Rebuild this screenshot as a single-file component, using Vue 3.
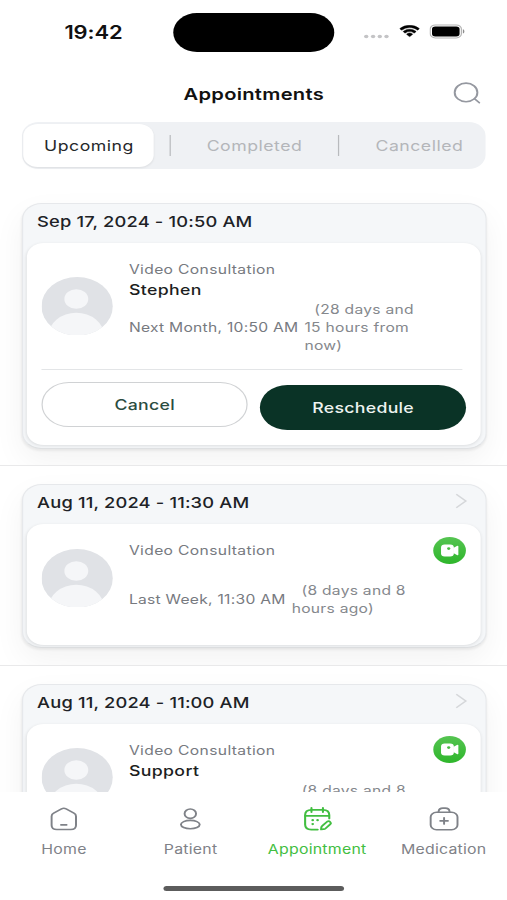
<script setup>
const filters = ['Upcoming', 'Completed', 'Cancelled']

const appointments = [
  {
    date: 'Sep 17, 2024 - 10:50 AM',
    kind: 'Video Consultation',
    name: 'Stephen',
    when: 'Next Month, 10:50 AM',
    relative: ['(28 days and', '15 hours from', 'now)'],
    editable: true,
  },
  {
    date: 'Aug 11, 2024 - 11:30 AM',
    kind: 'Video Consultation',
    name: '',
    when: 'Last Week, 11:30 AM',
    relative: ['(8 days and 8', 'hours ago)'],
    editable: false,
  },
  {
    date: 'Aug 11, 2024 - 11:00 AM',
    kind: 'Video Consultation',
    name: 'Support',
    when: 'Last Week, 11:00 AM',
    relative: ['(8 days and 8', 'hours ago)'],
    editable: false,
  },
]
</script>

<template>
  <div class="viewport">
    <div class="screen">
      <header class="status">
        <div class="clock">19:42</div>
        <div class="island"></div>
        <div class="signals">
          <svg class="dots" width="21" height="5" viewBox="0 0 21 5" fill="#c4c4c6">
            <circle cx="2.2" cy="2.5" r="1.8" /><circle cx="7.8" cy="2.5" r="1.8" />
            <circle cx="13.3" cy="2.5" r="1.8" /><circle cx="18.8" cy="2.5" r="1.8" />
          </svg>
          <svg class="wifi" width="17.5" height="13" viewBox="0 0 17.5 13" fill="#000" stroke="#000" stroke-width=".4">
            <path d="M8.75 2.6c2.4 0 4.6.95 6.25 2.5.13.12.33.12.45 0l1.2-1.2a.33.33 0 0 0 0-.47 11.4 11.4 0 0 0-15.8 0 .33.33 0 0 0 0 .47l1.2 1.2c.12.12.32.12.45 0A9.1 9.1 0 0 1 8.75 2.6z" />
            <path d="M8.75 6.6c1.3 0 2.55.5 3.5 1.35.13.12.33.12.46 0l1.2-1.2a.33.33 0 0 0 0-.48 7.5 7.5 0 0 0-10.3 0 .33.33 0 0 0 0 .48l1.2 1.2c.13.12.33.12.46 0A5.2 5.2 0 0 1 8.75 6.6z" />
            <path d="M11.1 9.4a.33.33 0 0 0 0-.5 3.6 3.6 0 0 0-4.7 0 .33.33 0 0 0 0 .5l2.1 2.1c.13.14.35.14.48 0z" />
          </svg>
          <svg class="battery" width="29" height="15" viewBox="0 0 29 15">
            <rect x=".6" y=".9" width="25.6" height="13" rx="4.2" fill="none" stroke="#b4b4b4" />
            <rect x="2.1" y="2.4" width="22.6" height="10" rx="2.7" fill="#000" />
            <path d="M27.4 5.3v4.2c.8-.35 1.3-1.2 1.3-2.1s-.5-1.75-1.3-2.1z" fill="#8e8e8e" />
          </svg>
        </div>
      </header>

      <div class="titlebar">
        <h1>Appointments</h1>
        <svg class="search" width="23" height="23" viewBox="0 0 23 23" fill="none" stroke="#9598a0" stroke-width="1.6" stroke-linecap="round">
          <circle cx="11" cy="10.4" r="9.3" /><path d="M18 16.8l3.9 3.9" />
        </svg>
      </div>

      <div class="segments">
        <template v-for="(f, i) in filters" :key="f">
          <i v-if="i" class="bar"></i>
          <button :class="['segment', 's' + i, { active: i === 0 }]"><span>{{ f }}</span></button>
        </template>
      </div>

      <main class="list">
        <section v-for="a in appointments" :key="a.date" class="item">
          <article class="card">
            <div class="card-head">
              <span>{{ a.date }}</span>
              <svg v-if="!a.editable" width="10" height="16" viewBox="0 0 10 16" fill="none" stroke="#d5d7da" stroke-width="1.4">
                <path d="M1 1.2l7.8 6.8L1 14.8" />
              </svg>
            </div>
            <div class="card-body">
              <div class="details">
                <svg class="avatar" width="58.5" height="58.5" viewBox="0 0 58 58">
                  <clipPath id="face"><circle cx="29" cy="29" r="29" /></clipPath>
                  <g clip-path="url(#face)">
                    <rect width="58" height="58" fill="#e0e2e6" />
                    <circle cx="28.3" cy="21.8" r="9.7" fill="#f5f6f8" />
                    <circle cx="28.3" cy="58" r="22.5" fill="#f5f6f8" />
                  </g>
                </svg>
                <div class="info">
                  <div class="kind">{{ a.kind }}</div>
                  <div class="name">{{ a.name }}</div>
                  <div class="times">
                    <span class="when">{{ a.when }}</span>
                    <div class="relative">
                      <div v-for="line in a.relative" :key="line">{{ line }}</div>
                    </div>
                  </div>
                </div>
                <svg v-if="!a.editable" class="video" width="27" height="27" viewBox="0 0 27 27">
                  <defs>
                    <linearGradient id="green" x1="0" y1="0" x2="0" y2="1">
                      <stop offset="0" stop-color="#55c451" /><stop offset="1" stop-color="#2eb62b" />
                    </linearGradient>
                  </defs>
                  <circle cx="13.5" cy="13.5" r="13.4" fill="url(#green)" />
                  <rect x="6.5" y="7.6" width="10.5" height="11.8" rx="3" fill="#fff" />
                  <path d="M16.5 11l3-2q1.2-.6 1.2.6v7.8q0 1.2-1.2.6l-3-2z" fill="#fff" />
                  <circle cx="12.8" cy="11.6" r="1.3" fill="#45bd40" />
                </svg>
              </div>
              <div v-if="a.editable" class="actions">
                <button class="cancel">Cancel</button>
                <button class="reschedule">Reschedule</button>
              </div>
            </div>
          </article>
        </section>
      </main>

      <nav class="tabs">
        <a>
          <svg width="26" height="26" viewBox="0 0 26 26" fill="none" stroke="currentColor" stroke-width="1.6" stroke-linecap="round" stroke-linejoin="round">
            <path d="M3.3 10.2q0-2 1.7-3.1l6.4-4.2q1.9-1.2 3.8 0l6.4 4.2q1.7 1.1 1.7 3.1v9q0 4.3-4.3 4.3H7.6q-4.3 0-4.3-4.3z" />
            <path d="M11 18.9h4.6" />
          </svg>
          <span>Home</span>
        </a>
        <a>
          <svg width="26" height="26" viewBox="0 0 26 26" fill="none" stroke="currentColor" stroke-width="1.6">
            <circle cx="13" cy="7.7" r="4.7" /><ellipse cx="13" cy="18.6" rx="7.7" ry="4.2" />
          </svg>
          <span>Patient</span>
        </a>
        <a class="current">
          <svg width="26" height="26" viewBox="0 0 26 26" fill="none" stroke="currentColor" stroke-width="1.7" stroke-linecap="round" stroke-linejoin="round">
            <path d="M8.3 1.9v4.2M17.7 1.9v4.2" />
            <path d="M8.3 3.9h9.4M8.3 3.9q-5.2.2-5.2 5v9.7q0 5 5 5h5.3M17.7 3.9q5.2.2 5.2 5v3.6" />
            <path d="M3.3 9.9h19.4" />
            <path d="M9.3 14.2h.02M13.3 14.2h.02M9.3 18.1h.02" stroke-width="2.2" />
            <path d="M21.3 15.5l-4.2 4.4q-.6.6-.7 1.5l-.2 2.1 2.1-.3q.9-.1 1.5-.7l4-4.4q.9-1-.1-2.1-1.1-1.3-2.4-.5z" />
          </svg>
          <span>Appointment</span>
        </a>
        <a>
          <svg width="26" height="26" viewBox="0 0 26 26" fill="none" stroke="currentColor" stroke-width="1.6" stroke-linecap="round" stroke-linejoin="round">
            <rect x="2" y="6.3" width="22" height="17.4" rx="4.8" />
            <path d="M8.5 6v-.5Q8.8 2.1 12 2.1h2q3.2 0 3.5 3.4V6" />
            <path d="M13 11.7v6.4M9.8 14.9h6.4" />
          </svg>
          <span>Medication</span>
        </a>
      </nav>
      <div class="home-bar"></div>
    </div>
  </div>
</template>

<style>
body {
  background: #fff;
}
</style>

<style scoped>
* {
  box-sizing: border-box;
}

.viewport {
  width: 507px;
  height: 900px;
  overflow: hidden;
}

/* The phone screen is laid out narrow and widened to fill the viewport. */
.screen {
  display: flex;
  flex-direction: column;
  width: 415.57px;
  height: 900px;
  background: #fff;
  color: #202226;
  font-family: Inter, "Liberation Sans", sans-serif;
  font-size: 13px;
  white-space: nowrap;
  transform: scaleX(1.22);
  transform-origin: 0 0;
}

button {
  margin: 0;
  padding: 0;
  border: 0;
  background: none;
  font: inherit;
  letter-spacing: inherit;
}

.status {
  display: grid;
  grid-template-columns: 142px 132px 1fr;
  height: 64px;
  flex: none;
}

.clock {
  padding: 22px 0 0 52.8px;
  color: #111;
  font-size: 18px;
  font-weight: 600;
  line-height: 22px;
  letter-spacing: -0.1px;
}

.island {
  height: 39px;
  margin-top: 12.5px;
  border-radius: 20px;
  background: #000;
}

.signals {
  display: flex;
  padding: 24px 0 0 23.5px;
}

.dots {
  margin-top: 9.5px;
}

.wifi {
  margin: 1px 0 0 8px;
}

.battery {
  margin-left: 7.5px;
}

.titlebar {
  display: grid;
  grid-template-columns: 1fr auto 1fr;
  height: 58px;
  flex: none;
  padding: 0 21.5px 0 22px;
}

h1 {
  grid-column: 2;
  margin: 19px 0 0;
  color: #111;
  font-size: 16.5px;
  font-weight: 600;
  line-height: 22px;
  letter-spacing: 0.23px;
}

.search {
  justify-self: end;
  margin-top: 18px;
}

.segments {
  display: flex;
  align-items: center;
  flex: none;
  width: 380.5px;
  height: 46.5px;
  margin-left: 17.9px;
  padding: 2px 2px 2px 1.5px;
  border-radius: 14px;
  background: #eff1f4;
  font-size: 14.5px;
  letter-spacing: 0.4px;
}

.segment {
  flex: none;
  height: 42.5px;
  color: #b4b6ba;
}

.s0 {
  width: 107px;
}

.s1 {
  width: 137px;
}

.s2 {
  width: 131px;
}

.segment.active {
  border-radius: 12px;
  background: #fff;
  box-shadow: 0 1px 2px rgba(0, 0, 0, 0.08);
  color: #26282b;
}

.bar {
  flex: none;
  width: 1.2px;
  height: 21px;
  background: #b8babd;
}

.s0 + .bar {
  margin-left: 12.5px;
}

.list {
  flex: 1;
  min-height: 0;
  padding-top: 16.8px;
  overflow: hidden;
}

.item {
  padding: 17.6px 17px 16.9px 17.9px;
  overflow: hidden;
  border-bottom: 1px solid #e9e9ea;
}

.card {
  padding: 0 3.5px 2.5px;
  border: 1px solid #e6e8eb;
  border-bottom-color: #dfe1e3;
  border-radius: 16px;
  background: #f5f7f9;
  box-shadow: 0 2px 2px rgba(0, 0, 0, 0.06), 0 12px 28px rgba(0, 0, 0, 0.05);
}

.card-head {
  display: flex;
  justify-content: space-between;
  height: 39px;
  padding: 7px 11px 0 8px;
  font-size: 15px;
  font-weight: 500;
  line-height: 22px;
  letter-spacing: 0.13px;
}

.card-head svg {
  margin-top: 1.2px;
}

.card-body {
  border-radius: 14px;
  background: #fff;
  padding: 18px 12px 15.2px;
  box-shadow: 0 1px 3px rgba(0, 0, 0, 0.1);
}

.details {
  display: flex;
  padding-bottom: 11.5px;
}

.avatar {
  flex: none;
  align-self: center;
  margin-top: -4px;
}

.info {
  flex: 1;
  padding-left: 12.8px;
  color: #777a7f;
  font-size: 12.8px;
  line-height: 18px;
  letter-spacing: 0.3px;
}

.kind {
  height: 18px;
}

.name {
  height: 22px;
  color: #1c1e21;
  font-size: 14.5px;
  font-weight: 500;
  line-height: 22px;
}

.times {
  display: flex;
  align-items: center;
}

.when {
  letter-spacing: 0.22px;
}

.relative {
  margin-left: 5px;
  color: #85888d;
  letter-spacing: 0.22px;
}

.relative div:first-child {
  padding-left: 8px;
}

.video {
  flex: none;
  margin: -5.5px 0.5px 0 0;
}

.actions {
  display: flex;
  gap: 10.5px;
  margin: 3px 3px 0 0;
  padding-top: 12px;
  border-top: 1px solid #e3e5e7;
  font-size: 14.5px;
  font-weight: 500;
  letter-spacing: 0.25px;
}

.actions button {
  flex: none;
  width: 168.5px;
  height: 45px;
  border-radius: 23px;
}

.cancel {
  border: 1px solid #d0d2d4;
  color: #2b4c40;
}

.actions .reschedule {
  margin-top: 2.5px;
  background: #0a3326;
  color: #eef3f1;
}

.tabs {
  display: grid;
  grid-template-columns: repeat(4, 1fr);
  flex: none;
  height: 94.5px;
  padding: 14px 0 0 0.6px;
  background: #fff;
  color: #7f8288;
  font-size: 13px;
  letter-spacing: 0.2px;
}

.tabs a {
  display: flex;
  flex-direction: column;
  align-items: center;
}

.tabs span {
  margin-top: 8.5px;
  line-height: 18px;
}

.tabs .current {
  color: #42be41;
}

.home-bar {
  flex: none;
  width: 148px;
  height: 5px;
  margin: 0 0 9px 134px;
  border-radius: 3px;
  background: #5c5c5c;
}
</style>
